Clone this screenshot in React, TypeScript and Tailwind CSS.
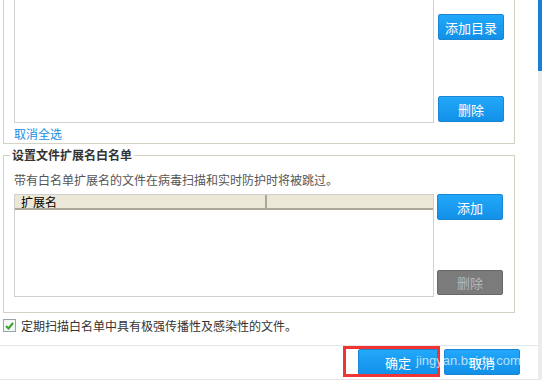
import React from "react";

const font = { fontFamily: '"Noto Sans CJK SC", "Liberation Sans", sans-serif' };

function BlueButton({ label, className = "" }: { label: string; className?: string }) {
  return (
    <button
      className={
        "flex items-center justify-center rounded-[2px] border border-[#1a86d4] bg-gradient-to-b from-[#22a8fa] to-[#1290e8] text-[13px] text-white " +
        className
      }
    >
      {label}
    </button>
  );
}

export default function App() {
  return (
    <div
      className="relative flex h-[380px] w-[542px] overflow-hidden bg-white text-[12px] leading-none text-[#333]"
      style={font}
    >
      <div className="flex w-[538px] flex-col">
        {/* top group (scrolled) */}
        <div className="ml-[3px] flex h-[144px] w-[512px] border-x border-b border-[#d4d2c4]">
          <div className="flex flex-col pl-[10px]">
            <div className="h-[123px] w-[420px] border-x border-b border-[#d0d0d0]" />
            <a className="mt-[5px] text-[12px] text-[#1a8ee0]">取消全选</a>
          </div>
          <div className="ml-[4px] flex flex-col pt-[14px]">
            <BlueButton label="添加目录" className="h-[26px] w-[66px]" />
            <BlueButton label="删除" className="mt-[56px] h-[26px] w-[66px]" />
          </div>
        </div>

        {/* whitelist group */}
        <fieldset className="mt-[3px] ml-[3px] h-[166px] w-[512px] border border-[#d4d2c4] pl-[10px]">
          <legend className="ml-[-4px] px-[2px] text-[12px] font-bold leading-[16px] text-[#333]">
            设置文件扩展名白名单
          </legend>
          <div className="mt-[11px] text-[12px] text-[#555]">带有白名单扩展名的文件在病毒扫描和实时防护时将被跳过。</div>
          <div className="mt-[8px] flex">
            <div className="h-[103px] w-[420px] border border-[#d0d0d0]">
              <div className="flex h-[15px] border-b-2 border-[#aca899] bg-[#ebe8d8] text-black">
                <div className="w-[252px] border-r-2 border-[#aca899] pl-[6px] leading-[14px]">扩展名</div>
                <div className="flex-1" />
              </div>
            </div>
            <div className="ml-[3px] flex flex-col">
              <BlueButton label="添加" className="h-[26px] w-[66px]" />
              <button className="mt-[50px] flex h-[25px] w-[66px] items-center justify-center rounded-[2px] border border-[#686868] bg-[#7b7b7b] text-[13px] text-[#b8b8b8]">
                删除
              </button>
            </div>
          </div>
        </fieldset>

        {/* checkbox */}
        <div className="mt-[6px] ml-[3px] flex items-center">
          <span className="flex h-[13px] w-[13px] items-center justify-center border border-[#9aa3ac] bg-[#f4f6f8]">
            <svg width="9" height="8" viewBox="0 0 9 8">
              <path d="M1 4 L3.5 6.5 L8 1" fill="none" stroke="#3aa12a" strokeWidth="2" />
            </svg>
          </span>
          <span className="ml-[5px] text-[12px] text-[#333]">定期扫描白名单中具有极强传播性及感染性的文件。</span>
        </div>

        <div className="mt-[13px] h-px w-full bg-[#e2e7ec]" />

        {/* footer buttons */}
        <div className="mt-[3px] flex justify-end pr-[18px]">
          <div className="relative">
            <BlueButton label="确定" className="h-[26px] w-[80px]" />
            <div className="absolute top-[-3px] left-[-15px] h-[31px] w-[97px] border-[3px] border-[#f03333]" />
          </div>
          <BlueButton label="取消" className="ml-[6px] h-[26px] w-[76px]" />
        </div>
        <div className="mt-auto h-px w-full bg-[#e4e4e4]" />
      </div>

      {/* scrollbar */}
      <div className="flex w-[4px] flex-col bg-[#ececec]">
        <div className="h-[71px] bg-[#1a7fd8]" />
      </div>

      {/* watermark */}
      <div
        className="pointer-events-none absolute top-[354px] left-[416px] text-[13px] text-white/70"
        style={{ fontFamily: '"Liberation Sans", sans-serif' }}
      >
        jingyan.baidu.com
      </div>
    </div>
  );
}
